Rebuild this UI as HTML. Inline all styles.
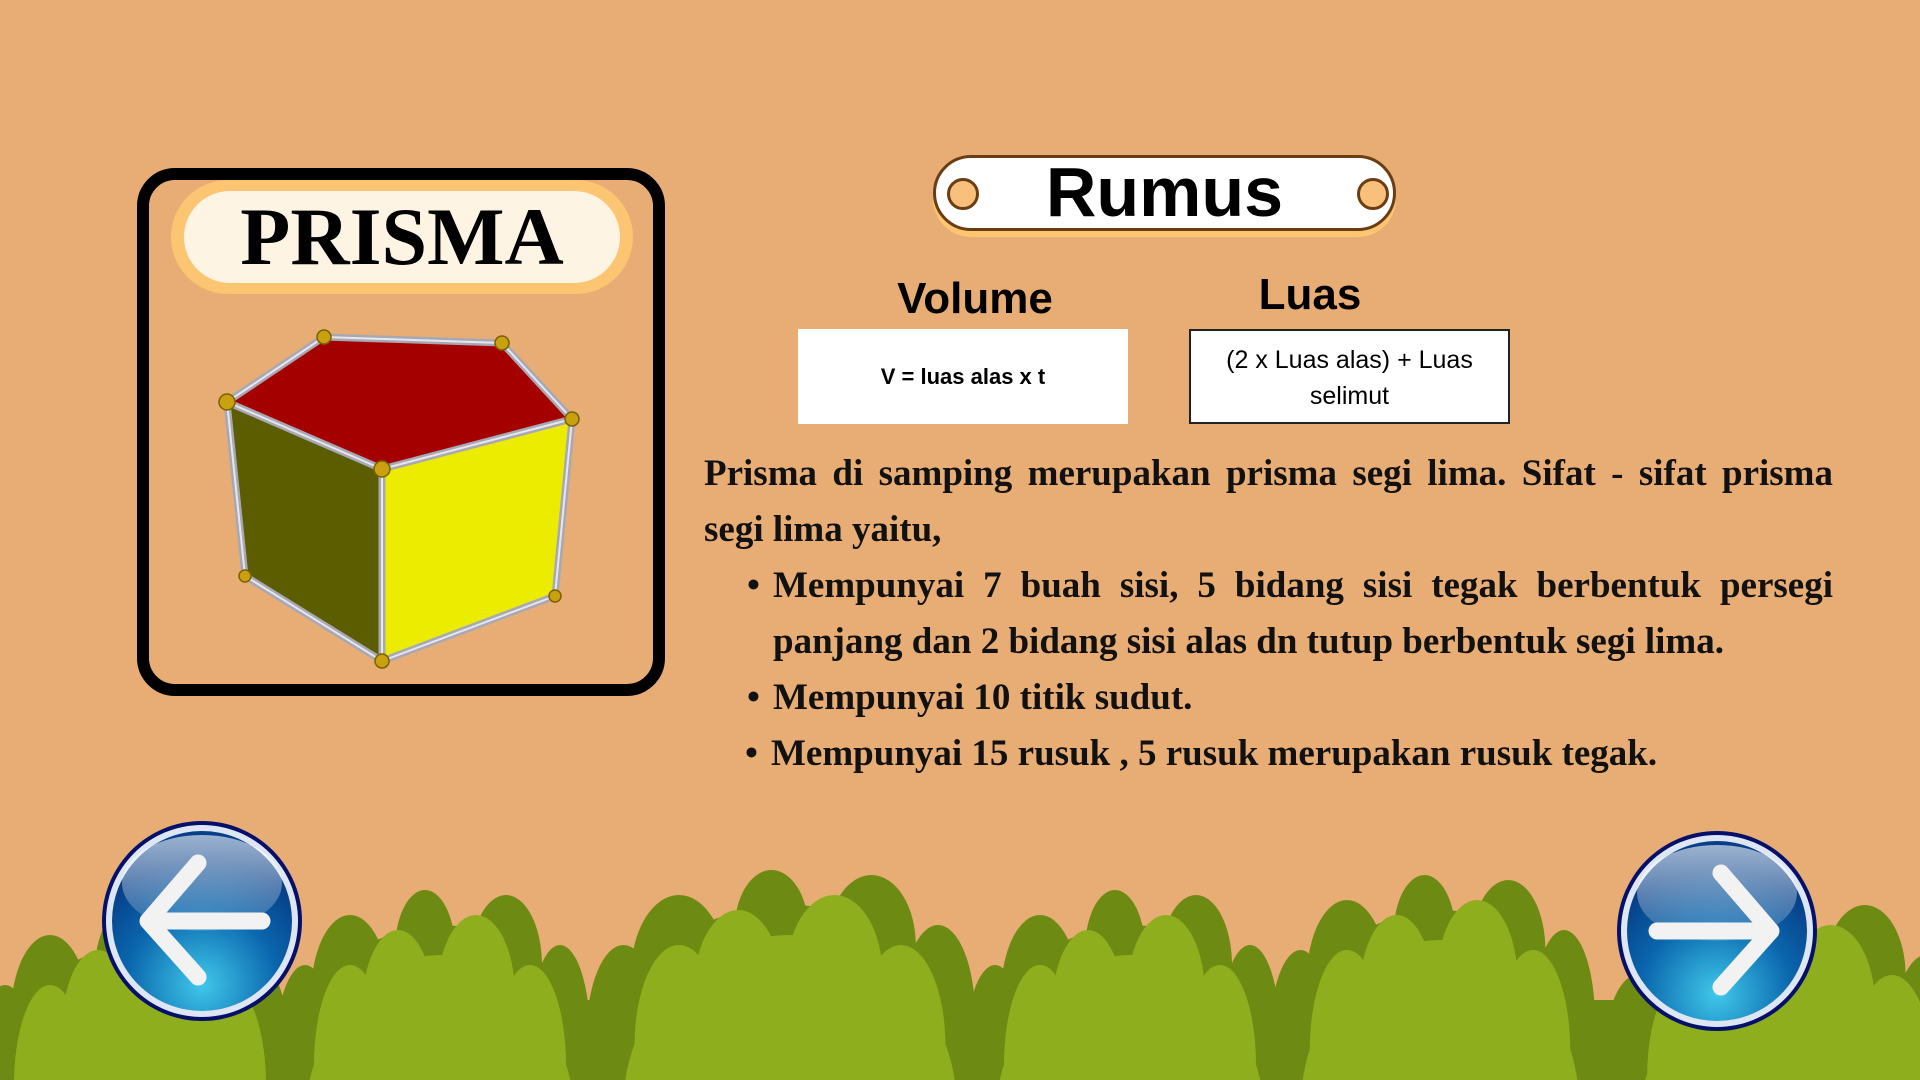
<!DOCTYPE html>
<html><head><meta charset="utf-8"><style>
html,body{margin:0;padding:0;width:1920px;height:1080px;overflow:hidden}
body{background:#e8ad74;position:relative;font-family:"Liberation Sans",sans-serif}
.abs{position:absolute}
.card{left:137px;top:168px;width:504px;height:504px;border:12px solid #000;border-radius:38px;box-sizing:content-box}
.pill{left:171px;top:180px;width:462px;height:114px;border-radius:57px;background:#fcc571;}
.pill2{left:184px;top:191px;width:436px;height:92px;border-radius:46px;background:#fdf4e4;text-align:center;font:bold 82px/92px "Liberation Serif",serif;color:#000}
.rumus{left:933px;top:155px;width:463px;height:76px;border-radius:40px;border:3px solid #6b3d12;background:#fff;box-sizing:border-box;box-shadow:0 6px 0 #fcc571}
.rt{left:933px;top:152px;width:463px;text-align:center;font:bold 70px/80px "Liberation Sans",sans-serif}
.dot{width:26px;height:26px;border-radius:50%;background:#f8c07a;border:3px solid #6b3d12;top:178px}
.h{font:bold 44px/50px "Liberation Sans",sans-serif;text-align:center}
.box{background:#fff;text-align:center;box-sizing:border-box}
.para{left:704px;width:1129px;font:bold 37px/56px "Liberation Serif",serif;color:#111}
.j{text-align:justify;text-align-last:justify}
.b{position:relative}
.b::before{content:"•";position:absolute;left:-26px}
</style></head><body>
<svg class="abs" style="left:0;top:0" width="1920" height="1080" viewBox="0 0 1920 1080">
<defs>
<radialGradient id="bl" cx="50%" cy="85%" r="70%"><stop offset="0" stop-color="#40c8ea"/><stop offset=".6" stop-color="#0a66ad"/><stop offset="1" stop-color="#073f88"/></radialGradient>
<linearGradient id="gl" x1="0" y1="0" x2="0" y2="1"><stop offset="0" stop-color="#fff" stop-opacity=".6"/><stop offset="1" stop-color="#fff" stop-opacity=".1"/></linearGradient>
</defs>
<g id="bush"></g>
<g transform="translate(202,921)">
<circle r="100" fill="#05106b"/><circle r="96" fill="#dde6f2"/>
<circle r="90" fill="url(#bl)"/><ellipse cx="0" cy="-38" rx="80" ry="48" fill="url(#gl)"/>
<path d="M60 0H-50M-4 -58L-54 0L-4 56" fill="none" stroke="#f2f2f2" stroke-width="17" stroke-linecap="round" stroke-linejoin="round"/>
</g>
<g transform="translate(1717,931)">
<circle r="100" fill="#05106b"/><circle r="96" fill="#dde6f2"/>
<circle r="90" fill="url(#bl)"/><ellipse cx="0" cy="-38" rx="80" ry="48" fill="url(#gl)"/>
<path d="M-60 0H50M4 -58L54 0L4 56" fill="none" stroke="#f2f2f2" stroke-width="17" stroke-linecap="round" stroke-linejoin="round"/>
</g>
<polygon points="324,337 502,343 572,419 382,469 227,402" fill="#a50000"/>
<polygon points="227,402 382,469 382,661 245,576" fill="#5c5c00"/>
<polygon points="382,469 572,419 555,596 382,661" fill="#ecec00"/>
<g fill="none" stroke="#a8a8b4" stroke-width="7" stroke-linejoin="round">
<polygon points="324,337 502,343 572,419 382,469 227,402"/>
<polyline points="227,402 245,576 382,661 555,596 572,419"/><line x1="382" y1="469" x2="382" y2="661"/>
</g>
<g fill="none" stroke="#e6e6ee" stroke-width="2" stroke-linejoin="round">
<polygon points="324,337 502,343 572,419 382,469 227,402"/>
<polyline points="227,402 245,576 382,661 555,596 572,419"/><line x1="382" y1="469" x2="382" y2="661"/>
</g>
<g fill="#c8a010" stroke="#7a6000" stroke-width="1.5">
<circle cx="324" cy="337" r="7"/><circle cx="502" cy="343" r="7"/><circle cx="572" cy="419" r="7"/><circle cx="382" cy="469" r="8"/><circle cx="227" cy="402" r="8"/><circle cx="245" cy="576" r="6"/><circle cx="382" cy="661" r="7"/><circle cx="555" cy="596" r="6"/>
</g>
</svg>
<script>
(function(){
var cl=[[140,300,945],[440,300,925],[790,370,905],[1130,300,925],[1440,310,910],[1790,340,935]];
var s='<rect x="0" y="1000" width="1920" height="80" fill="#6d8a12"/>';
cl.forEach(function(c){var x=c[0],w=c[1],t=c[2];
 var d=[[x,t+200,w*0.55,200],[x-w*0.3,t+70,w*0.13,80],[x+w*0.22,t+40,w*0.12,70],[x-w*0.05,t+25,w*0.1,60],[x+w*0.4,t+110,w*0.1,90],[x-w*0.45,t+130,w*0.1,90]];
 var l=[[x,t+200,w*0.45,170],[x-w*0.14,t+85,w*0.12,80],[x+w*0.12,t+70,w*0.13,80],[x-w*0.3,t+140,w*0.12,100],[x+w*0.3,t+140,w*0.12,100],[x-w*0.08,t+260,w*0.35,120]];
 d.forEach(function(e){s+='<ellipse fill="#6d8a12" cx="'+e[0]+'" cy="'+e[1]+'" rx="'+e[2]+'" ry="'+e[3]+'"/>';});
 l.forEach(function(e){s+='<ellipse fill="#8fae1e" cx="'+e[0]+'" cy="'+e[1]+'" rx="'+e[2]+'" ry="'+e[3]+'"/>';});
});
document.getElementById('bush').innerHTML=s;
})();
</script>
<div class="abs card"></div>
<div class="abs pill"></div>
<div class="abs pill2">PRISMA</div>
<div class="abs rumus"></div>
<div class="abs dot" style="left:947px"></div>
<div class="abs dot" style="left:1357px"></div>
<div class="abs rt">Rumus</div>
<div class="abs h" style="left:830px;width:290px;top:274px">Volume</div>
<div class="abs h" style="left:1160px;width:300px;top:270px">Luas</div>
<div class="abs box" style="left:798px;top:329px;width:330px;height:95px;font:bold 22px/95px 'Liberation Sans',sans-serif">V = luas alas x t</div>
<div class="abs box" style="left:1189px;top:329px;width:321px;height:95px;border:2px solid #222;font:25px/36px 'Liberation Sans',sans-serif;padding-top:11px">(2 x Luas alas) + Luas<br>selimut</div>
<div class="abs para" style="top:446px">
<div class="j">Prisma di samping merupakan prisma segi lima. Sifat - sifat prisma</div>
<div>segi lima yaitu,</div>
<div style="padding-left:69px">
<div class="b j">Mempunyai 7 buah sisi, 5 bidang sisi tegak berbentuk persegi</div>
<div>panjang dan 2 bidang sisi alas dn tutup berbentuk segi lima.</div>
<div class="b">Mempunyai 10 titik sudut.</div>
<div class="b" style="margin-left:-2px">Mempunyai 15 rusuk , 5 rusuk merupakan rusuk tegak.</div>
</div>
</div>
</body></html>
